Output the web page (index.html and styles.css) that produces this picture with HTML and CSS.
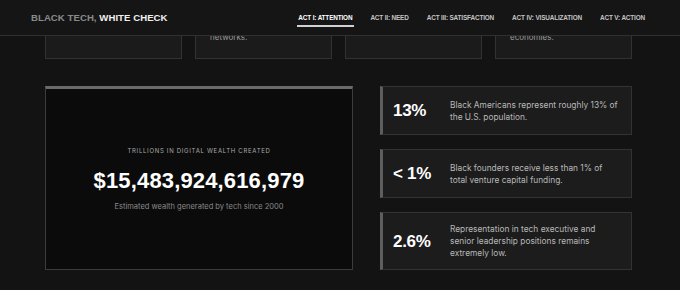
FILE: index.html
```html
<!DOCTYPE html>
<html lang="en">
<head>
<meta charset="utf-8">
<title>Black Tech, White Check</title>
<link rel="stylesheet" href="styles.css">
</head>
<body>
<header class="topbar">
  <div class="logo"><span class="logo-dim">BLACK TECH,</span> <span class="logo-bright">WHITE CHECK</span></div>
  <nav class="nav">
    <a class="nav-item active" href="#attention">ACT I: ATTENTION</a>
    <a class="nav-item" href="#need">ACT II: NEED</a>
    <a class="nav-item" href="#satisfaction">ACT III: SATISFACTION</a>
    <a class="nav-item" href="#visualization">ACT IV: VISUALIZATION</a>
    <a class="nav-item" href="#action">ACT V: ACTION</a>
  </nav>
</header>
<main class="page">
  <div class="peek">
    <div class="cards">
      <div class="card"><p>Tech giants shape how billions of people work, learn and talk.</p></div>
      <div class="card"><p>Platforms decide who gets seen, who gets heard, who gets funded and who gains access to exclusive networks.</p></div>
      <div class="card"><p>Algorithms now decide credit, hiring and housing.</p></div>
      <div class="card"><p>Digital infrastructure is now the backbone of global finance, culture, trade and today's interconnected economies.</p></div>
    </div>
  </div>
  <section class="hero">
    <div class="wealth">
      <div class="wealth-label">TRILLIONS IN DIGITAL WEALTH CREATED</div>
      <div class="wealth-number">$15,483,924,616,979</div>
      <div class="wealth-sub">Estimated wealth generated by tech since 2000</div>
    </div>
    <div class="stats">
      <div class="stat">
        <div class="stat-num">13%</div>
        <p class="stat-text">Black Americans represent roughly 13% of the U.S. population.</p>
      </div>
      <div class="stat">
        <div class="stat-num">&lt; 1%</div>
        <p class="stat-text">Black founders receive less than 1% of total venture capital funding.</p>
      </div>
      <div class="stat">
        <div class="stat-num">2.6%</div>
        <p class="stat-text">Representation in tech executive and senior leadership positions remains extremely low.</p>
      </div>
    </div>
  </section>
</main>
</body>
</html>
```
FILE: styles.css
```css
* { box-sizing: border-box; }
html, body { margin: 0; padding: 0; }
body {
  background: #131313;
  color: #ddd;
  font-family: Inter, "Liberation Sans", sans-serif;
  height: 290px;
  overflow: hidden;
}
.topbar {
  position: fixed;
  top: 0; left: 0; right: 0;
  height: 36px;
  background: #151515;
  border-bottom: 1px solid #303030;
  display: flex;
  align-items: center;
  justify-content: space-between;
  padding: 0 35px 0 31px;
  z-index: 10;
}
.logo {
  font-family: "Liberation Sans", Arial, sans-serif;
  font-weight: 700;
  font-size: 9.6px;
  letter-spacing: 0.05px;
}
.logo-dim { color: #8a8a8a; }
.logo-bright { color: #f0f0f0; }
.nav { display: flex; gap: 18px; align-items: center; }
.nav-item {
  font-family: "Liberation Sans", Arial, sans-serif;
  font-weight: 700;
  font-size: 6.4px;
  letter-spacing: -0.15px;
  color: #c4c4c4;
  text-decoration: none;
  position: relative;
  line-height: 8px;
  white-space: nowrap;
}
.nav-item.active { color: #fff; }
.nav-item.active::after {
  content: "";
  position: absolute;
  left: -1px; right: -2px;
  bottom: -5px;
  height: 1.5px;
  background: #d0d0d0;
}
.page { padding: 0 48px 0 45px; }
.peek {
  height: 59px;
  overflow: hidden;
  display: flex;
  align-items: flex-end;
}
.cards {
  width: 100%;
  display: grid;
  grid-template-columns: repeat(4, 1fr);
  gap: 13px;
}
.card {
  background: #1b1b1b;
  border: 1px solid #323232;
  padding: 12px 14px 15px;
}
.card p {
  margin: 0;
  font-size: 8px;
  line-height: 12px;
  color: #9a9a9a;
}
.hero {
  margin-top: 27px;
  display: grid;
  grid-template-columns: 308px 1fr;
  gap: 27px;
}
.wealth {
  background: #0b0b0b;
  border: 1px solid #3c3c3c;
  border-top: 3px solid #6a6a6a;
  display: flex;
  flex-direction: column;
  align-items: center;
  justify-content: center;
}
.wealth-label {
  font-size: 6px;
  letter-spacing: 0.7px;
  color: #a8a8a8;
  line-height: 8px;
}
.wealth-number {
  font-family: "Liberation Sans", Arial, sans-serif;
  font-weight: 700;
  font-size: 22px;
  color: #fff;
  line-height: 26px;
  margin-top: 13px;
  letter-spacing: 0.15px;
}
.wealth-sub {
  font-size: 7.5px;
  color: #8a8a8a;
  margin-top: 8px;
  line-height: 10px;
}
.stats { display: flex; flex-direction: column; gap: 14px; }
.stat {
  background: #1c1c1c;
  border: 1px solid #333;
  border-left: 3px solid #5e5e5e;
  padding: 10px;
  display: flex;
  align-items: center;
}
.stat-num {
  font-family: "Liberation Sans", Arial, sans-serif;
  font-weight: 700;
  font-size: 17px;
  line-height: 27px;
  color: #fff;
  width: 57px;
  flex: none;
  letter-spacing: -0.3px;
}
.stat-text {
  margin: 0;
  font-size: 8.35px;
  line-height: 12px;
  color: #b8b8b8;
  max-width: 170px;
}
```
